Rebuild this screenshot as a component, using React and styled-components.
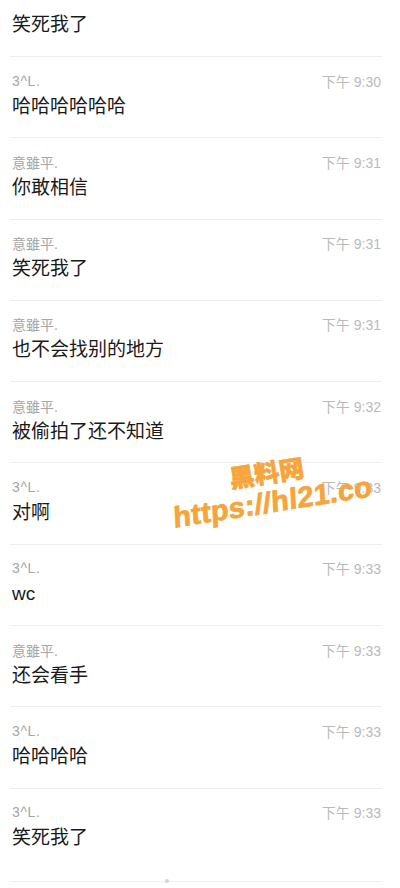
import React from "react";
import styled, { createGlobalStyle } from "styled-components";

const Global = createGlobalStyle`
  html, body { margin: 0; padding: 0; background: #ffffff; }
  body {
    font-family: "Liberation Sans", "Noto Sans CJK SC", "Noto Sans CJK TC", sans-serif;
    -webkit-font-smoothing: antialiased;
  }
`;

const Screen = styled.div`
  position: relative;
  width: 400px;
  height: 888px;
  overflow: hidden;
  background: #fff;
`;

const List = styled.div`
  margin: 0 18px 0 10px;
  display: flex;
  flex-direction: column;
`;

const Row = styled.div`
  display: flex;
  flex-direction: column;
  padding: ${(p) => (p.$first ? "12px 1px 18px 2px" : p.$last ? "14.5px 1px 29.5px 2px" : "14.5px 1px 17.8px 2px")};
  border-top: ${(p) => (p.$first ? "none" : "1px solid #efefef")};
  border-bottom: ${(p) => (p.$last ? "1px solid #efefef" : "none")};
`;

const Meta = styled.div`
  display: flex;
  justify-content: space-between;
  align-items: center;
  height: 18px;
  margin-bottom: 4px;
`;

const Name = styled.span`
  font-family: "Liberation Sans", "Noto Sans CJK TC", "Noto Sans CJK SC", sans-serif;
  font-size: 14px;
  letter-spacing: ${(p) => (p.$latin ? "0.6px" : "0")};
  color: #a6a6a6;
`;

const Time = styled.span`
  font-family: "Liberation Sans", "Noto Sans CJK SC", sans-serif;
  font-size: 14px;
  color: #bababa;
`;

const Text = styled.div`
  font-family: "Liberation Sans", "Noto Sans CJK SC", sans-serif;
  font-size: 19px;
  line-height: 26px;
  color: #1a1a1a;
`;

const Watermark = styled.div`
  position: absolute;
  left: 168px;
  top: 457px;
  width: 206px;
  display: flex;
  flex-direction: column;
  align-items: center;
  transform: rotate(-9deg);
  color: #f6a43c;
  pointer-events: none;
`;

const WmTitle = styled.div`
  font-family: "Noto Sans CJK SC", sans-serif;
  font-weight: 900;
  font-size: 25px;
  line-height: 29px;
  margin-left: -4px;
  -webkit-text-stroke: 0.6px #f6a43c;
`;

const WmUrl = styled.div`
  font-family: "Liberation Sans", sans-serif;
  font-weight: 700;
  font-size: 29px;
  line-height: 32px;
  letter-spacing: 0.3px;
  transform: skewX(-6deg);
  -webkit-text-stroke: 0.8px #f6a43c;
`;

const Dot = styled.div`
  position: absolute;
  left: 165px;
  top: 879px;
  width: 4px;
  height: 4px;
  border-radius: 50%;
  background: #d4d4d4;
`;

const messages = [
  { name: "3^L.", time: "下午 9:30", text: "哈哈哈哈哈哈" },
  { name: "意雖平.", time: "下午 9:31", text: "你敢相信" },
  { name: "意雖平.", time: "下午 9:31", text: "笑死我了" },
  { name: "意雖平.", time: "下午 9:31", text: "也不会找别的地方" },
  { name: "意雖平.", time: "下午 9:32", text: "被偷拍了还不知道" },
  { name: "3^L.", time: "下午 9:33", text: "对啊" },
  { name: "3^L.", time: "下午 9:33", text: "wc" },
  { name: "意雖平.", time: "下午 9:33", text: "还会看手" },
  { name: "3^L.", time: "下午 9:33", text: "哈哈哈哈" },
  { name: "3^L.", time: "下午 9:33", text: "笑死我了" },
];

export default function App() {
  return (
    <Screen>
      <Global />
      <List>
        <Row $first>
          <Text>笑死我了</Text>
        </Row>
        {messages.map((m, i) => (
          <Row key={i} $last={i === messages.length - 1}>
            <Meta>
              <Name $latin={m.name === "3^L."}>{m.name}</Name>
              <Time>{m.time}</Time>
            </Meta>
            <Text>{m.text}</Text>
          </Row>
        ))}
      </List>
      <Watermark>
        <WmTitle>黑料网</WmTitle>
        <WmUrl>https://hl21.co</WmUrl>
      </Watermark>
      <Dot />
    </Screen>
  );
}
